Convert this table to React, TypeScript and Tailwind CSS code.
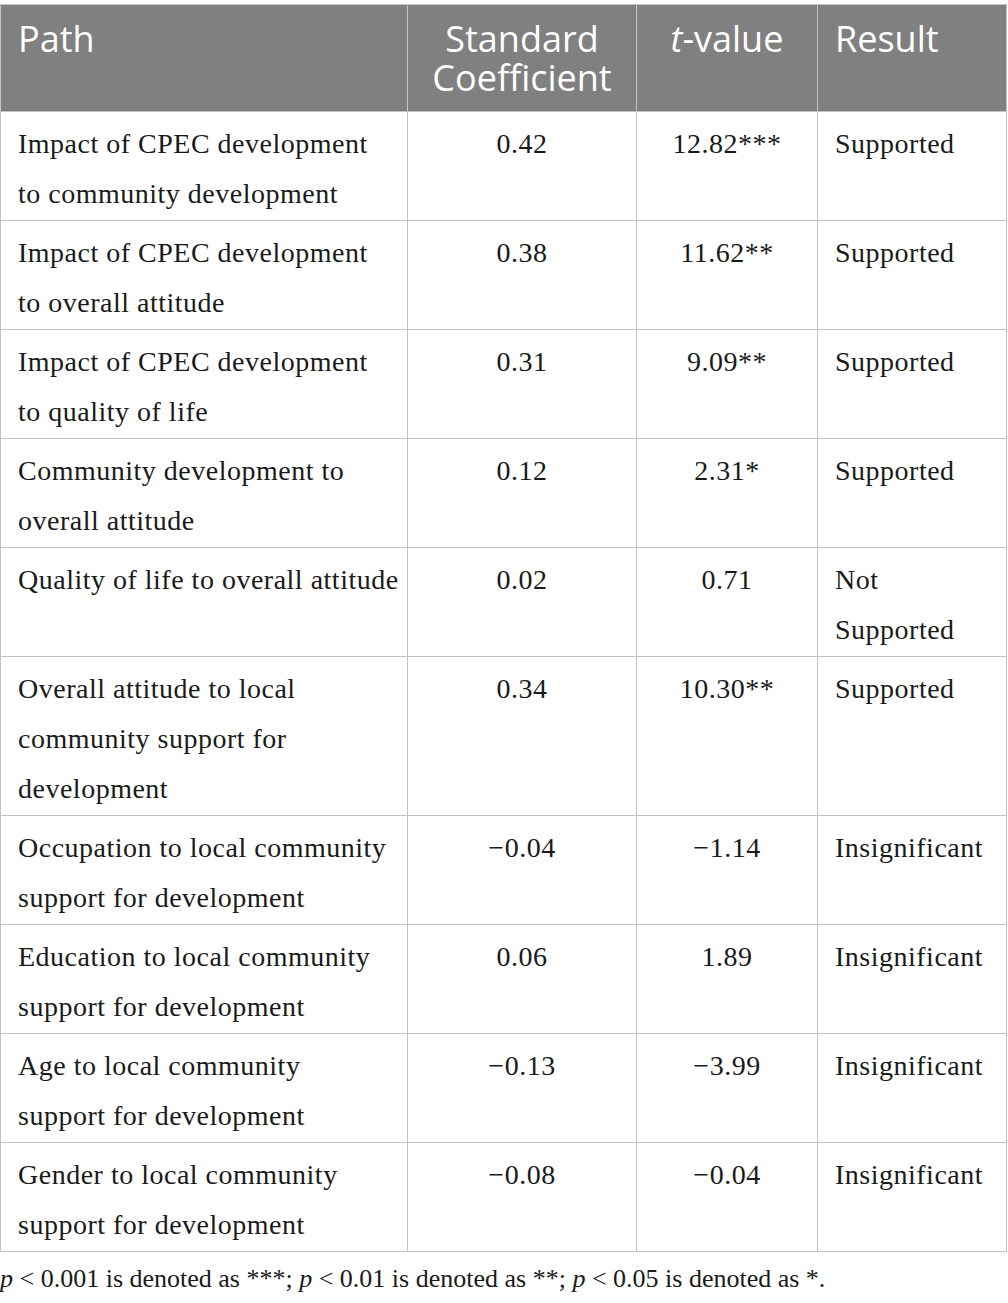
import React from "react";

type Row = { path: string[]; coef: string; t: string; result: string[] };

// line breaks follow the published table
const rows: Row[] = [
  { path: ["Impact of CPEC development", "to community development"], coef: "0.42", t: "12.82***", result: ["Supported"] },
  { path: ["Impact of CPEC development", "to overall attitude"], coef: "0.38", t: "11.62**", result: ["Supported"] },
  { path: ["Impact of CPEC development", "to quality of life"], coef: "0.31", t: "9.09**", result: ["Supported"] },
  { path: ["Community development to", "overall attitude"], coef: "0.12", t: "2.31*", result: ["Supported"] },
  { path: ["Quality of life to overall attitude"], coef: "0.02", t: "0.71", result: ["Not", "Supported"] },
  { path: ["Overall attitude to local", "community support for", "development"], coef: "0.34", t: "10.30**", result: ["Supported"] },
  { path: ["Occupation to local community", "support for development"], coef: "\u22120.04", t: "\u22121.14", result: ["Insignificant"] },
  { path: ["Education to local community", "support for development"], coef: "0.06", t: "1.89", result: ["Insignificant"] },
  { path: ["Age to local community", "support for development"], coef: "\u22120.13", t: "\u22123.99", result: ["Insignificant"] },
  { path: ["Gender to local community", "support for development"], coef: "\u22120.08", t: "\u22120.04", result: ["Insignificant"] },
];

const serif = "font-['Liberation_Serif',serif]";
const cell = "border border-[#c2c2c2] pt-[7px] pb-[1px] align-top";
const head = "border border-[#c2c2c2] pt-[14px] pb-[14px] align-top font-normal";

function Lines({ items }: { items: string[] }) {
  return (
    <>
      {items.map((l) => (
        <div key={l} className="whitespace-nowrap">{l}</div>
      ))}
    </>
  );
}

export default function App() {
  return (
    <div className="w-[1008px] bg-white pt-[4px]">
      <table className="w-[1006px] table-fixed border-collapse">
        <colgroup>
          <col className="w-[407px]" />
          <col className="w-[229px]" />
          <col className="w-[181px]" />
          <col className="w-[189px]" />
        </colgroup>
        <thead>
          <tr className="bg-[#808080] font-['Open_Sans',sans-serif] text-[36px] leading-[39px] text-white">
            <th className={`${head} px-[17px] text-left`}>Path</th>
            <th className={`${head} px-[4px] text-center`}>
              <div>Standard</div>
              <div>Coefficient</div>
            </th>
            <th className={`${head} px-[4px] text-center`}>
              <i>t</i>-value
            </th>
            <th className={`${head} px-[17px] text-left`}>Result</th>
          </tr>
        </thead>
        <tbody className={`${serif} text-[28px] leading-[50px] tracking-[0.5px] text-[#1a1a1a]`}>
          {rows.map((r) => (
            <tr key={r.path.join(" ")}>
              <td className={`${cell} pl-[17px] pr-[6px]`}><Lines items={r.path} /></td>
              <td className={`${cell} px-[4px] text-center`}>{r.coef}</td>
              <td className={`${cell} px-[4px] text-center`}>{r.t}</td>
              <td className={`${cell} pl-[17px] pr-[4px]`}><Lines items={r.result} /></td>
            </tr>
          ))}
        </tbody>
      </table>
      <p className={`${serif} mt-[12px] text-[26px] leading-[30px] text-[#1a1a1a]`}>
        <i>p</i> &lt; 0.001 is denoted as ***; <i>p</i> &lt; 0.01 is denoted as **; <i>p</i> &lt; 0.05 is denoted as *.
      </p>
    </div>
  );
}
